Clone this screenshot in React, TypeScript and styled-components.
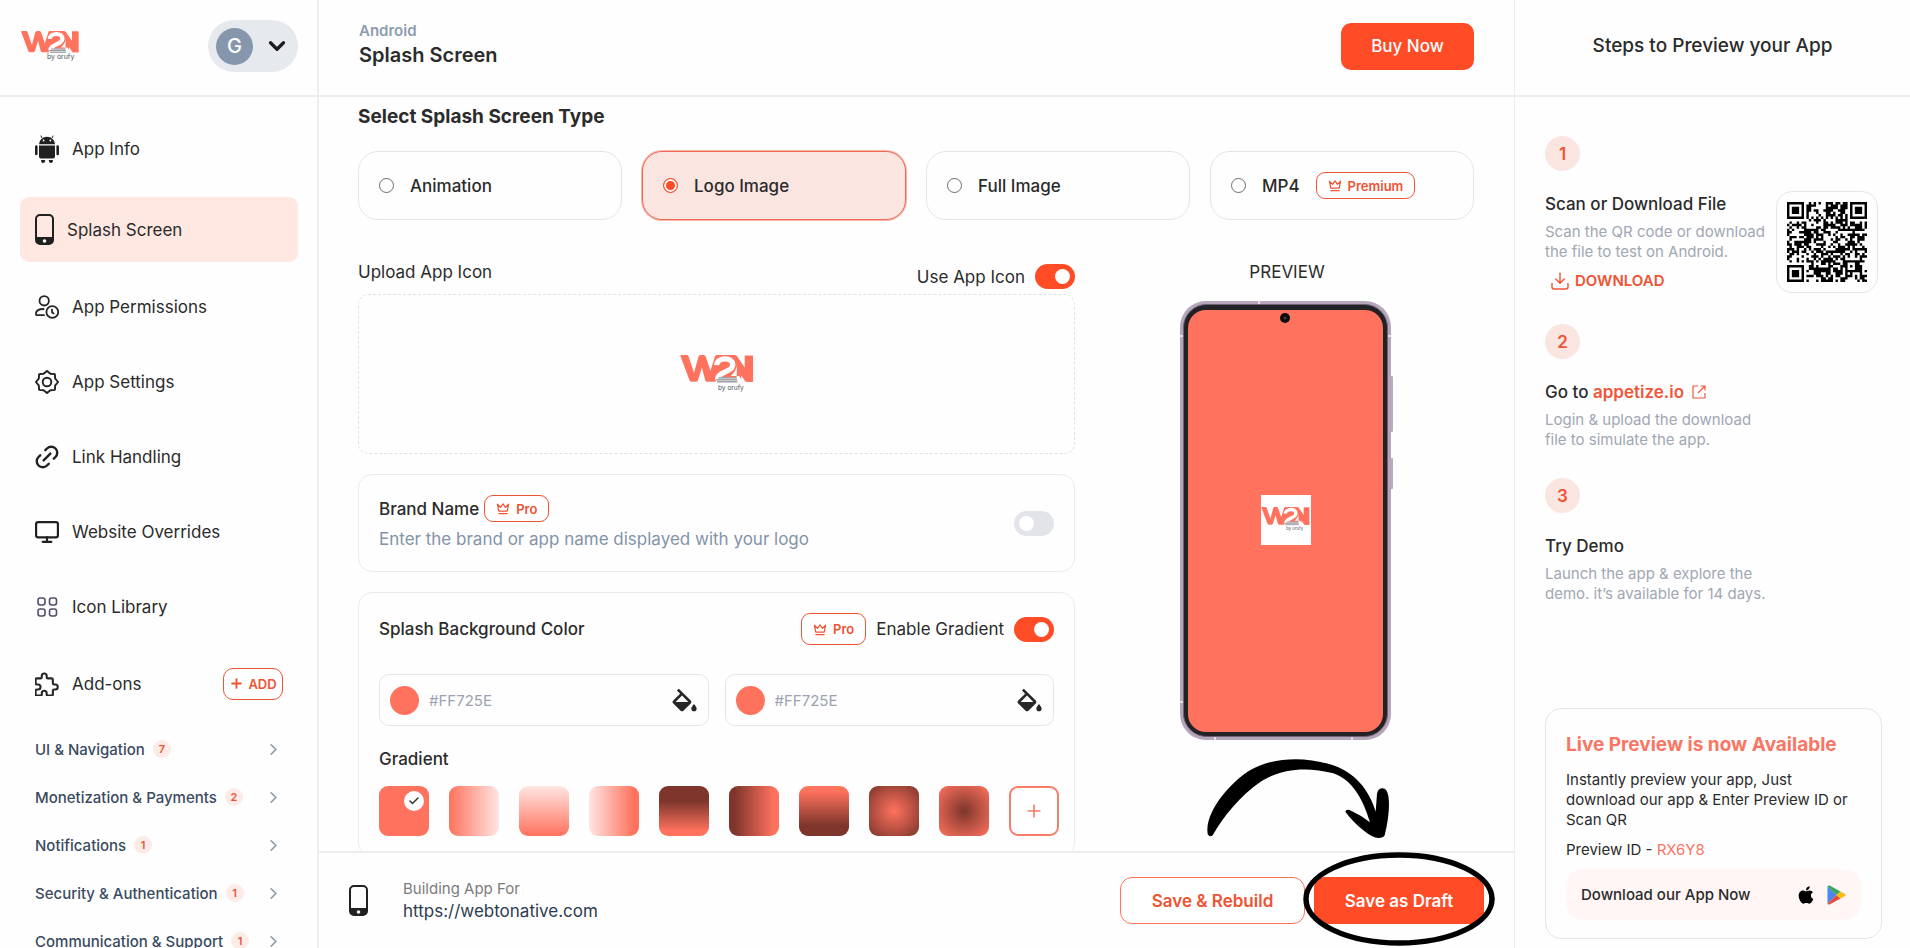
import React, { useId, useState } from "react";
import styled, { createGlobalStyle, css } from "styled-components";
import { Check, ChevronDown, ChevronRight, Link2, Monitor, Plus } from "lucide-react";
import { FaApple } from "react-icons/fa";

const accent = "#ff4b26";
const coral = "#ff725e";
const line = "#eceef0";
const ink = "#2b2b2b";

const GlobalStyle = createGlobalStyle`
  *, *::before, *::after { box-sizing: border-box; }
  body {
    margin: 0;
    background: #fefefe;
    color: ${ink};
    font-family: Inter, "Liberation Sans", sans-serif;
    font-size: 17px;
    overflow: hidden;
  }
  button, input { font: inherit; color: inherit; }
  h1, h2, h3, p, ul, ol, fieldset { margin: 0; padding: 0; border: 0; }
  ul, ol { list-style: none; }
  a { color: inherit; text-decoration: none; }
  svg { display: block; flex: none; }
`;

/* ---------- layout ---------- */

const Shell = styled.div`
  display: grid;
  grid-template-columns: 319px minmax(0, 1fr) 396px;
  height: 100vh;
  overflow: hidden;
`;

const Sidebar = styled.aside`
  display: flex;
  flex-direction: column;
  min-height: 0;
  overflow: hidden;
  border-right: 2px solid ${line};
`;

const Main = styled.main`
  display: flex;
  flex-direction: column;
  min-height: 0;
`;

const StepsPanel = styled.aside`
  display: flex;
  flex-direction: column;
  min-height: 0;
  border-left: 1px solid ${line};
`;

const Bar = styled.header`
  display: flex;
  flex: none;
  align-items: center;
  justify-content: space-between;
  height: 97px;
  border-bottom: 2px solid ${line};
`;

const BrandBar = styled(Bar)`
  padding: 0 19px 3px 20px;
`;

const TitleBar = styled(Bar)`
  padding: 0 40px 3px;
`;

const StepsBar = styled(Bar)`
  justify-content: center;
  padding-bottom: 3px;
  font-size: 19px;
  font-weight: 500;
  line-height: 24px;
`;

/* ---------- buttons ---------- */

const SolidButton = styled.button<{ $wide?: boolean }>`
  height: 47px;
  padding: 0;
  width: ${(p) => (p.$wide ? 170 : 133)}px;
  border: 0;
  border-radius: 10px;
  background: ${accent};
  color: #fff;
  font-size: 17px;
  font-weight: ${(p) => (p.$wide ? 600 : 500)};
  cursor: pointer;
`;

const OutlineButton = styled.button`
  width: 185px;
  height: 47px;
  padding: 0;
  border: 1px solid ${coral};
  border-radius: 12px;
  background: #fff;
  color: #ee5434;
  font-size: 17px;
  font-weight: 600;
  cursor: pointer;
`;

/* ---------- sidebar ---------- */

const AccountButton = styled.button`
  display: flex;
  align-items: center;
  gap: 11px;
  width: 90px;
  height: 52px;
  padding: 0 8px;
  border: 0;
  border-radius: 26px;
  background: #e6e9ed;
  color: #1c1c1c;
`;

const Avatar = styled.span`
  display: grid;
  place-items: center;
  width: 37px;
  height: 37px;
  border-radius: 50%;
  background: #8697ad;
  color: #fff;
  font-size: 20px;
  font-weight: 500;
`;

const NavList = styled.ul`
  padding: 14px 19px 0 20px;
`;

const NavLink = styled.a<{ $active?: boolean }>`
  display: flex;
  align-items: center;
  gap: 13px;
  height: 75px;
  padding: 0 15px;
  border-radius: 9px;
  ${(p) =>
    p.$active &&
    css`
      height: 65px;
      margin: 11px 0 7px;
      background: #ffe7e2;
    `}
`;

const AddonHead = styled.div`
  display: flex;
  align-items: center;
  gap: 13px;
  height: 81px;
  padding: 0 34px 2px 35px;
`;

const AddButton = styled.button`
  display: flex;
  align-items: center;
  justify-content: center;
  gap: 4px;
  width: 60px;
  height: 32px;
  margin-left: auto;
  padding: 0;
  border: 1px solid #ee5434;
  border-radius: 10px;
  background: #fff;
  color: #ee5434;
  font-size: 13px;
  font-weight: 600;
`;

const CategoryButton = styled.button`
  display: flex;
  align-items: center;
  gap: 8px;
  width: 100%;
  height: 48px;
  padding: 0 34px 0 35px;
  border: 0;
  background: none;
  color: #3a4a60;
  font-size: 15px;
  font-weight: 500;
  white-space: nowrap;

  > svg { margin-left: auto; color: #8b95a3; }
`;

const Count = styled.span`
  display: grid;
  place-items: center;
  width: 18px;
  height: 18px;
  border-radius: 50%;
  background: #fdebe8;
  color: #ee5434;
  font-size: 11px;
  font-weight: 600;
`;

/* ---------- main column ---------- */

const Platform = styled.p`
  color: #8a9bb0;
  font-size: 15px;
  font-weight: 600;
  line-height: 20px;
`;

const PageTitle = styled.h1`
  font-size: 20px;
  font-weight: 600;
  line-height: 28px;
`;

const TitleGroup = styled.div`
  padding-bottom: 2px;
`;

const Content = styled.div`
  flex: 1;
  min-height: 0;
  overflow: hidden;
  padding: 6px 40px 0 39px;
`;

const TypeGroup = styled.fieldset`
  min-width: 0;
`;

const TypeTitle = styled.legend`
  padding: 0;
  font-size: 19px;
  font-weight: 700;
  line-height: 28px;
`;

const TypeGrid = styled.div`
  display: grid;
  grid-template-columns: repeat(4, minmax(0, 1fr));
  gap: 20px;
  margin-top: 20px;
`;

const TypeCard = styled.label`
  display: flex;
  align-items: center;
  gap: 16px;
  height: 69px;
  padding: 0 20px;
  border: 1px solid #e3e6e8;
  border-radius: 20px;
  font-weight: 500;

  &:has(input:checked) {
    border-color: #ee6a55;
    background: #fbe5e1;
    box-shadow: 0 0 0 1px #ee6a5580;
  }
`;

const Radio = styled.input`
  appearance: none;
  width: 15px;
  height: 15px;
  margin: 0;
  border: 1px solid #6b6b6b;
  border-radius: 50%;
  background: #fff;

  &:checked {
    border-color: ${accent};
    background: ${accent};
    box-shadow: inset 0 0 0 2px #fff;
  }
`;

const Columns = styled.div`
  display: grid;
  grid-template-columns: minmax(0, 1fr) 374px;
  gap: 25px;
  margin-top: 40px;
`;

const Row = styled.div`
  display: flex;
  align-items: center;
  justify-content: space-between;
`;

const UploadHead = styled(Row)`
  align-items: flex-start;
  height: 34px;
`;

const UploadLabel = styled.span`
  line-height: 24px;
`;

const SwitchLabel = styled.label`
  display: flex;
  align-items: center;
  gap: 10px;
`;

const UploadSwitch = styled(SwitchLabel)`
  padding-top: 4px;
`;

const Switch = styled.input`
  appearance: none;
  flex: none;
  width: 40px;
  height: 25px;
  margin: 0;
  padding: 5px;
  border-radius: 13px;
  background: #e3e4e9;

  &::before {
    content: "";
    display: block;
    width: 15px;
    height: 15px;
    border-radius: 50%;
    background: #fff;
  }

  &:checked { background: ${accent}; }
  &:checked::before { margin-left: 15px; }
`;

const DropArea = styled.div`
  display: grid;
  place-items: center;
  height: 160px;
  border: 1px dashed #dfe3e6;
  border-radius: 10px;
`;

const Card = styled.section`
  padding: 20px;
  border: 1px solid #e9ecee;
  border-radius: 14px;
`;

const BrandCard = styled(Card)`
  display: flex;
  align-items: center;
  justify-content: space-between;
  height: 98px;
  margin-top: 20px;
`;

const BackgroundCard = styled(Card)`
  margin-top: 20px;
`;

const CardTitle = styled.h2`
  font-size: 17px;
  font-weight: 500;
  line-height: 24px;
`;

const BrandTitle = styled.div`
  display: flex;
  align-items: center;
  gap: 5px;
`;

const Hint = styled.p`
  margin-top: 5px;
  color: #8393a8;
  line-height: 24px;
`;

const Tools = styled.div`
  display: flex;
  align-items: center;
  gap: 10px;
`;

const Tier = styled.span<{ $tall?: boolean }>`
  display: inline-flex;
  align-items: center;
  justify-content: center;
  gap: 6px;
  height: ${(p) => (p.$tall ? 32 : 27)}px;
  padding: 0 11px;
  border: 1px solid #ee5434;
  border-radius: 9px;
  background: #fff;
  color: #ee5434;
  font-size: 13px;
  font-weight: 600;
`;

const FieldRow = styled.div`
  display: grid;
  grid-template-columns: repeat(2, minmax(0, 1fr));
  gap: 16px;
  margin-top: 29px;
`;

const ColorField = styled.label`
  display: flex;
  align-items: center;
  gap: 10px;
  height: 52px;
  padding: 0 10px;
  border: 1px solid #e4e7ea;
  border-radius: 10px;
`;

const Dot = styled.span`
  flex: none;
  width: 29px;
  height: 29px;
  border-radius: 50%;
  background: ${coral};
`;

const HexInput = styled.input`
  flex: 1;
  min-width: 0;
  padding: 0;
  border: 0;
  outline: 0;
  background: none;
  color: #9ba3b0;
  font-size: 15px;
`;

const GradientTitle = styled.h3`
  margin-top: 21px;
  font-size: 17px;
  font-weight: 500;
  line-height: 24px;
`;

const Swatches = styled.div`
  display: flex;
  gap: 20px;
  margin-top: 15px;
`;

const Swatch = styled.button<{ $fill: string }>`
  display: flex;
  flex: none;
  align-items: flex-start;
  justify-content: flex-end;
  width: 50px;
  height: 50px;
  padding: 5px;
  border: 0;
  border-radius: 9px;
  background: ${(p) => p.$fill};
`;

const Tick = styled.span`
  display: grid;
  place-items: center;
  width: 20px;
  height: 20px;
  border-radius: 50%;
  background: #fff;
  color: #333;
`;

const AddSwatch = styled.button`
  display: grid;
  flex: none;
  place-items: center;
  width: 50px;
  height: 50px;
  padding: 0;
  border: 2px solid #f97b69;
  border-radius: 9px;
  background: #fff;
  color: #f97b69;
`;

const PreviewColumn = styled.div`
  display: flex;
  flex-direction: column;
  align-items: center;
  gap: 17px;
  line-height: 24px;
`;

/* ---------- footer ---------- */

const Footer = styled.footer`
  display: flex;
  flex: none;
  align-items: center;
  height: 97px;
  padding: 0 30px;
  border-top: 2px solid ${line};
  background: #fefefe;
`;

const Site = styled.div`
  margin-left: 35px;
  color: #2d3b50;
  line-height: 24px;
`;

const SiteCaption = styled.p`
  color: #7b7b7b;
  font-size: 15px;
  line-height: 20px;
`;

const Actions = styled.div`
  display: flex;
  gap: 9px;
  margin-left: auto;
`;

const Marked = styled.div`
  position: relative;
`;

const MarkEllipse = styled.svg`
  position: absolute;
  top: -26px;
  left: -12px;
  pointer-events: none;
`;

const MarkArrow = styled.svg`
  position: absolute;
  right: 92px;
  bottom: 84px;
  pointer-events: none;
`;

/* ---------- steps panel ---------- */

const StepsBody = styled.div`
  display: flex;
  flex: 1;
  flex-direction: column;
  min-height: 0;
  padding: 39px 28px 9px 30px;
`;

const Step = styled.li`
  display: flex;
  align-items: flex-start;
  justify-content: space-between;
  margin-bottom: 28px;
`;

const StepNumber = styled.span`
  display: grid;
  place-items: center;
  width: 35px;
  height: 35px;
  margin-bottom: 21px;
  border-radius: 50%;
  background: #fbe5e1;
  color: #ee5434;
  font-size: 17px;
  font-weight: 600;
`;

const StepTitle = styled.h2`
  display: flex;
  align-items: center;
  margin-bottom: 6px;
  font-size: 17px;
  font-weight: 500;
  line-height: 24px;
  white-space: pre;

  a {
    display: flex;
    align-items: center;
    gap: 8px;
    color: #f0563a;
    font-weight: 600;
  }
`;

const StepText = styled.p`
  color: #a1a7b3;
  font-size: 15px;
  line-height: 20px;
  white-space: nowrap;
`;

const DownloadLink = styled.a`
  display: flex;
  align-items: center;
  gap: 6px;
  margin: 7px 0 3px 6px;
  color: #ee5434;
  font-size: 15px;
  font-weight: 600;
  line-height: 24px;
`;

const QrBox = styled.div`
  flex: none;
  margin: 55px 4px 0 0;
  padding: 10px;
  border: 1px solid #e3e6e8;
  border-radius: 16px;
`;

const LiveCard = styled.section`
  height: 231px;
  margin-top: auto;
  padding: 24px 20px 18px;
  border: 1px solid #e3e6e8;
  border-radius: 16px;
  font-size: 15px;
  line-height: 20px;
`;

const LiveTitle = styled.h2`
  margin-bottom: 13px;
  color: #f97564;
  font-size: 19px;
  font-weight: 700;
  line-height: 24px;
  white-space: nowrap;
`;

const PreviewId = styled.p`
  margin: 10px 0 9px;
  span { color: #f97564; }
`;

const StoreButton = styled.button`
  display: flex;
  align-items: center;
  gap: 11px;
  width: 100%;
  height: 51px;
  padding: 0 15px;
  border: 0;
  border-radius: 16px;
  background: #fff6f5;
  font-size: 15px;
  font-weight: 500;

  span { margin-right: auto; }
`;

/* ---------- drawings ---------- */

function Logo({ width, captionX, captionSize }: { width: number; captionX: number; captionSize: number }) {
  return (
    <svg width={width} height={Math.round(width / 2)} viewBox="0 0 224 116" role="img" aria-label="W2N by orufy">
      <path
        fill={coral}
        d="M0 2Q1 0 4 0H20Q24 0 25 4L42 54L55 6Q57 0 62 0H71Q76 0 78 6L92 48L106 4Q108 0 112 0H166Q170 0 173 4L197 40V2H222V82H199L186 62V82H104H82Q78 82 76 77L66 38L54 77Q52 82 48 82H35Q30 82 28 77Z"
      />
      <path d="M111 31C112 6 162 4 160 31C158 54 112 50 114 76" fill="none" stroke="#fff" strokeWidth="16" />
      <path d="M173 22Q174 46 154 64H180L192 84H108V68H172" fill="#fff" />
      <path d="M173 5L197 40V2H222V82H202L172 40Z" fill={coral} />
      <path d="M116 70H172M108 76H174M112 82H174" stroke="#6b6f76" strokeWidth="3" />
      <text x={captionX} y="108" fontSize={captionSize} fill="#4b5560">by orufy</text>
    </svg>
  );
}

function PhoneGlyph({ width = 19 }: { width?: number }) {
  return (
    <svg width={width} height="31" viewBox="0 0 19 31">
      <rect x="1" y="1" width="17" height="29" rx="4" fill="none" stroke="#202020" strokeWidth="2" />
      <path d="M1 23H18V26Q18 30 14 30H5Q1 30 1 26Z" fill="#202020" />
      <circle cx="9.500" cy="27" r="1.800" fill="#fff" />
    </svg>
  );
}

function AndroidGlyph() {
  return (
    <svg width="24" height="28" viewBox="0 0 24 28" fill="#202020">
      <path d="M4 9.200A8 7.500 0 0 1 20 9.200Z" />
      <path d="M7 3L5.800 .6M17 3L18.200 .6" stroke="#202020" strokeWidth="1" />
      <circle cx="8.600" cy="5.500" r=".9" fill="#fff" />
      <circle cx="15.400" cy="5.500" r=".9" fill="#fff" />
      <path d="M4 10.400H20V21.500Q20 23.500 18 23.500H6Q4 23.500 4 21.500Z" />
      <rect x="0" y="10.200" width="2.600" height="10" rx="1.300" />
      <rect x="21.400" y="10.200" width="2.600" height="10" rx="1.300" />
      <path d="M6 25H10.200Q10.200 28 8.100 28T6 25ZM13.800 25H18Q18 28 15.900 28T13.800 25Z" />
    </svg>
  );
}

function PermissionsGlyph() {
  return (
    <svg width="24" height="24" viewBox="0 0 24 24" fill="none" stroke="#252525" strokeWidth="1.800" strokeLinecap="round" strokeLinejoin="round">
      <circle cx="9.200" cy="5.800" r="4.700" />
      <path d="M9 20.200H2.200Q.9 20.200 .9 18.900C.9 15.500 4 14 8.600 14" />
      <circle cx="17.300" cy="17" r="5.900" />
      <path d="M17 14.600V17.300L18.600 18.400" />
    </svg>
  );
}

function GearGlyph() {
  const points = Array.from({ length: 16 }, (_, i) => {
    const radius = i % 2 ? 8.9 : 11.1;
    const angle = (i * Math.PI) / 8 - Math.PI / 2;
    return `${(12 + radius * Math.cos(angle)).toFixed(2)},${(12 + radius * Math.sin(angle)).toFixed(2)}`;
  }).join(" ");
  return (
    <svg width="24" height="24" viewBox="0 0 24 24" fill="none" stroke="#202020" strokeWidth="1.900" strokeLinejoin="round">
      <polygon points={points} />
      <circle cx="12" cy="12" r="4.300" />
    </svg>
  );
}

function GridGlyph() {
  return (
    <svg width="24" height="24" viewBox="0 0 24 24" fill="none" stroke="#4f4d68" strokeWidth="1.600">
      {[3, 14.500].map((x) =>
        [3, 14].map((y) => <rect key={`${x}-${y}`} x={x} y={y} width="7" height="7" rx="2.200" />)
      )}
    </svg>
  );
}

function PuzzleGlyph() {
  return (
    <svg width="24" height="24" viewBox="2.500 1.800 19.500 19.500" fill="none" stroke="#252525" strokeWidth="1.700" strokeLinejoin="round">
      <path d="M4 7h3a1 1 0 0 0 1-1v-1a2 2 0 0 1 4 0v1a1 1 0 0 0 1 1h3a1 1 0 0 1 1 1v3a1 1 0 0 0 1 1h1a2 2 0 0 1 0 4h-1a1 1 0 0 0-1 1v3a1 1 0 0 1-1 1h-3a1 1 0 0 1-1-1v-1a2 2 0 0 0-4 0v1a1 1 0 0 1-1 1h-3a1 1 0 0 1-1-1v-3a1 1 0 0 1 1-1h1a2 2 0 0 0 0-4h-1a1 1 0 0 1-1-1v-3a1 1 0 0 1 1-1" />
    </svg>
  );
}

const DiagonalLink = styled(Link2)`
  rotate: -45deg;
  overflow: visible;
`;

function CrownGlyph() {
  return (
    <svg width="14" height="13" viewBox="0 0 14 14" fill="none" stroke="currentColor" strokeWidth="1.300" strokeLinecap="round" strokeLinejoin="round">
      <path d="M2.400 9.800L1 2.400L4.400 5.800L7 2L9.600 5.800L13 2.400L11.600 9.800ZM2.600 12.600H11.400" />
    </svg>
  );
}

function BucketGlyph() {
  return (
    <svg width="26" height="24" viewBox="2.500 -.5 19.500 18" fill="#262626">
      <path d="M16.560 8.940L7.620 0 6.210 1.410l2.380 2.380-5.150 5.150a1.490 1.490 0 0 0 0 2.120l5.500 5.500c.29.29.68.44 1.060.44s.77-.15 1.060-.44l5.500-5.500c.59-.58.59-1.530 0-2.120zM5.210 10L10 5.210 14.790 10H5.210zM19 11.500s-2 2.170-2 3.500c0 1.100.9 2 2 2s2-.9 2-2c0-1.330-2-3.500-2-3.500z" />
    </svg>
  );
}

function DownloadGlyph() {
  return (
    <svg width="18" height="18" viewBox="0 0 18 18" fill="none" stroke="currentColor" strokeWidth="1.400" strokeLinecap="round" strokeLinejoin="round">
      <path d="M9 1V11M4.800 7L9 11.200L13.200 7M1 11.500V15Q1 17 3 17H15Q17 17 17 15V11.500" />
    </svg>
  );
}

function ExternalGlyph() {
  return (
    <svg width="14" height="14" viewBox="0 0 14 14" fill="none" stroke="currentColor" strokeWidth="1.200" strokeLinejoin="round">
      <path d="M6 1H1V13H13V8M8.500 1H13V5.500M13 1L6 8" />
    </svg>
  );
}

function PlayGlyph() {
  return (
    <svg width="19" height="20" viewBox="0 0 19 20">
      <path d="M.5 1.200V18.800L9.500 10Z" fill="#4a86f0" />
      <path d="M.5 1.200Q1 0 2.600 .6L13.500 6.500L9.500 10Z" fill="#37a55a" />
      <path d="M.5 18.800Q1 20 2.600 19.400L13.500 13.500L9.500 10Z" fill="#ea4a3c" />
      <path d="M13.300 6.400L18 9Q19.400 10 18 11L13.300 13.600L9.300 10Z" fill="#fbbc12" />
    </svg>
  );
}

const QR_SIZE = 33;

function isFinder(x: number, y: number): boolean | null {
  const corners = [
    [0, 0],
    [QR_SIZE - 7, 0],
    [0, QR_SIZE - 7],
  ];
  for (const [cx, cy] of corners) {
    const dx = Math.abs(x - cx - 3);
    const dy = Math.abs(y - cy - 3);
    const ring = Math.max(dx, dy);
    if (ring <= 4) return ring !== 2 && ring !== 4;
  }
  const align = Math.max(Math.abs(x - 26), Math.abs(y - 26));
  if (align <= 2) return align !== 1;
  return null;
}

function QrCode() {
  let seed = 90;
  let path = "";
  for (let y = 0; y < QR_SIZE; y++) {
    for (let x = 0; x < QR_SIZE; x++) {
      seed = (seed * 1103515245 + 12345) % 2147483648;
      const fixed = isFinder(x, y);
      const dark = fixed ?? (x === 6 || y === 6 ? (x + y) % 2 === 0 : seed / 2147483648 < 0.52);
      if (dark) path += `M${x} ${y}h1v1h-1z`;
    }
  }
  return (
    <svg width="80" height="80" viewBox={`0 0 ${QR_SIZE} ${QR_SIZE}`} role="img" aria-label="QR code">
      <path d={path} fill="#000" />
    </svg>
  );
}

const PhoneBody = styled.div`
  position: relative;
  width: 211px;
  height: 439px;
  margin-right: 3px;
  padding: 8px 8px 10px;
`;

const PhoneFrame = styled.svg`
  position: absolute;
  inset: 0;
`;

const PhoneScreen = styled.div`
  position: relative;
  display: grid;
  place-items: center;
  height: 100%;
`;

const SplashTile = styled.div`
  display: grid;
  place-items: center;
  width: 50px;
  height: 50px;
  background: #fff;
`;

function PhonePreview() {
  return (
    <PhoneBody>
      <PhoneFrame width="214" height="439" viewBox="0 0 214 439">
        <rect x="209" y="75" width="4" height="56" rx="1" fill="#b9abc0" />
        <rect x="209" y="157" width="4" height="31" rx="1" fill="#b9abc0" />
        <rect x="0" y="0" width="211" height="439" rx="26" fill="#b5a6ba" />
        <path d="M0 35H3M208 35H211M79 0V3M0 401H3M35 436V439M172 436V439" stroke="#e7dfea" strokeWidth="2" />
        <rect x="3.500" y="3.500" width="204" height="432" rx="23" fill="#232125" stroke="#6b6272" strokeWidth="1" />
        <rect x="8" y="9" width="195" height="422" rx="18" fill={coral} />
        <circle cx="105" cy="17" r="5" fill="#0b0b0b" />
        <circle cx="105" cy="17" r="1.500" fill="#3a3a3a" />
      </PhoneFrame>
      <PhoneScreen>
        <SplashTile>
          <Logo width={49} captionX={115} captionSize={20} />
        </SplashTile>
      </PhoneScreen>
    </PhoneBody>
  );
}

/* ---------- data ---------- */

const navItems = [
  { label: "App Info", icon: <AndroidGlyph /> },
  { label: "Splash Screen", icon: <PhoneGlyph />, active: true },
  { label: "App Permissions", icon: <PermissionsGlyph /> },
  { label: "App Settings", icon: <GearGlyph /> },
  { label: "Link Handling", icon: <DiagonalLink size={24} viewBox="2 2 20 20" color="#202020" /> },
  { label: "Website Overrides", icon: <Monitor size={24} viewBox="1 1 22 22" color="#202020" /> },
  { label: "Icon Library", icon: <GridGlyph /> },
];

const categories: [string, number][] = [
  ["UI & Navigation", 7],
  ["Monetization & Payments", 2],
  ["Notifications", 1],
  ["Security & Authentication", 1],
  ["Communication & Support", 1],
];

const splashTypes = ["Animation", "Logo Image", "Full Image", "MP4"];

const dark = "#7d352c";
const pale = "#ffe6e2";
const gradients = [
  coral,
  `linear-gradient(90deg, ${coral}, ${pale})`,
  `linear-gradient(180deg, ${pale}, ${coral})`,
  `linear-gradient(90deg, ${pale}, ${coral} 90%)`,
  `linear-gradient(180deg, ${dark} 30%, ${coral} 90%)`,
  `linear-gradient(90deg, ${dark} 10%, ${coral} 90%)`,
  `linear-gradient(180deg, ${coral} 10%, ${dark} 80%)`,
  `radial-gradient(circle, ${coral}, ${dark})`,
  `radial-gradient(circle, ${dark}, ${coral})`,
];

/* ---------- page ---------- */

function TierBadge({ label, tall }: { label: string; tall?: boolean }) {
  return (
    <Tier $tall={tall}>
      <CrownGlyph />
      {label}
    </Tier>
  );
}

function ColorInput({ name }: { name: string }) {
  return (
    <ColorField>
      <Dot />
      <HexInput aria-label={name} defaultValue="#FF725E" />
      <BucketGlyph />
    </ColorField>
  );
}

export default function App() {
  const [type, setType] = useState("Logo Image");
  const [picked, setPicked] = useState(0);
  const brandId = useId();

  return (
    <>
      <GlobalStyle />
      <Shell>
        <Sidebar>
          <BrandBar>
            <Logo width={60} captionX={100} captionSize={27} />
            <AccountButton aria-label="Account">
              <Avatar>G</Avatar>
              <ChevronDown size={26} strokeWidth={3} />
            </AccountButton>
          </BrandBar>
          <nav>
            <NavList>
              {navItems.map((item) => (
                <li key={item.label}>
                  <NavLink href="#" $active={item.active}>
                    {item.icon}
                    {item.label}
                  </NavLink>
                </li>
              ))}
            </NavList>
            <AddonHead>
              <PuzzleGlyph />
              Add-ons
              <AddButton>
                <Plus size={15} strokeWidth={3} />
                ADD
              </AddButton>
            </AddonHead>
            {categories.map(([label, count]) => (
              <CategoryButton key={label}>
                {label}
                <Count>{count}</Count>
                <ChevronRight size={19} />
              </CategoryButton>
            ))}
          </nav>
        </Sidebar>

        <Main>
          <TitleBar>
            <TitleGroup>
              <Platform>Android</Platform>
              <PageTitle>Splash Screen</PageTitle>
            </TitleGroup>
            <SolidButton>Buy Now</SolidButton>
          </TitleBar>

          <Content>
            <TypeGroup>
              <TypeTitle>Select Splash Screen Type</TypeTitle>
              <TypeGrid>
                {splashTypes.map((name) => (
                  <TypeCard key={name}>
                    <Radio type="radio" name="splash-type" checked={type === name} onChange={() => setType(name)} />
                    {name}
                    {name === "MP4" && <TierBadge label="Premium" />}
                  </TypeCard>
                ))}
              </TypeGrid>
            </TypeGroup>

            <Columns>
              <div>
                <UploadHead>
                  <UploadLabel>Upload App Icon</UploadLabel>
                  <UploadSwitch>
                    Use App Icon
                    <Switch type="checkbox" defaultChecked />
                  </UploadSwitch>
                </UploadHead>
                <DropArea>
                  <Logo width={76} captionX={115} captionSize={20} />
                </DropArea>

                <BrandCard>
                  <div>
                    <BrandTitle>
                      <CardTitle as="label" htmlFor={brandId}>Brand Name</CardTitle>
                      <TierBadge label="Pro" />
                    </BrandTitle>
                    <Hint>Enter the brand or app name displayed with your logo</Hint>
                  </div>
                  <Switch id={brandId} type="checkbox" />
                </BrandCard>

                <BackgroundCard>
                  <Row>
                    <CardTitle>Splash Background Color</CardTitle>
                    <Tools>
                      <TierBadge label="Pro" tall />
                      <SwitchLabel>
                        Enable Gradient
                        <Switch type="checkbox" defaultChecked />
                      </SwitchLabel>
                    </Tools>
                  </Row>
                  <FieldRow>
                    <ColorInput name="First color" />
                    <ColorInput name="Second color" />
                  </FieldRow>
                  <GradientTitle>Gradient</GradientTitle>
                  <Swatches>
                    {gradients.map((fill, i) => (
                      <Swatch key={fill} $fill={fill} aria-label={`Gradient ${i + 1}`} onClick={() => setPicked(i)}>
                        {picked === i && (
                          <Tick>
                            <Check size={12} strokeWidth={3} />
                          </Tick>
                        )}
                      </Swatch>
                    ))}
                    <AddSwatch aria-label="Add gradient">
                      <Plus size={20} strokeWidth={2} />
                    </AddSwatch>
                  </Swatches>
                </BackgroundCard>
              </div>

              <PreviewColumn>
                PREVIEW
                <PhonePreview />
              </PreviewColumn>
            </Columns>
          </Content>

          <Footer>
            <PhoneGlyph />
            <Site>
              <SiteCaption>Building App For</SiteCaption>
              https://webtonative.com
            </Site>
            <Actions>
              <OutlineButton>Save &amp; Rebuild</OutlineButton>
              <Marked>
                <SolidButton $wide>Save as Draft</SolidButton>
                <MarkEllipse width="194" height="96" viewBox="0 0 194 96">
                  <ellipse cx="97" cy="48" rx="93" ry="44" fill="none" stroke="#000" strokeWidth="5.500" />
                </MarkEllipse>
                <MarkArrow width="187" height="83" viewBox="315 50 561 249">
                  <path d="M322 268C324 200 400 120 450 90C510 55 600 45 690 72C765 94 808 150 827 214L831 160Q834 144 848 144Q861 145 865 166Q872 210 854 285Q850 293 835 293Q818 293 790 270Q758 244 736 214Q737 206 749 209Q782 224 810 246C790 180 760 120 700 99C620 78 545 85 485 122C420 165 370 230 338 285Q330 292 323 282Z" />
                </MarkArrow>
              </Marked>
            </Actions>
          </Footer>
        </Main>

        <StepsPanel>
          <StepsBar as="div">Steps to Preview your App</StepsBar>
          <StepsBody>
            <ol>
              <Step>
                <div>
                  <StepNumber>1</StepNumber>
                  <StepTitle>Scan or Download File</StepTitle>
                  <StepText>
                    Scan the QR code or download
                    <br />
                    the file to test on Android.
                  </StepText>
                  <DownloadLink href="#">
                    <DownloadGlyph />
                    DOWNLOAD
                  </DownloadLink>
                </div>
                <QrBox>
                  <QrCode />
                </QrBox>
              </Step>
              <Step>
                <div>
                  <StepNumber>2</StepNumber>
                  <StepTitle>
                    {"Go to "}
                    <a href="#">
                      appetize.io
                      <ExternalGlyph />
                    </a>
                  </StepTitle>
                  <StepText>
                    Login &amp; upload the download
                    <br />
                    file to simulate the app.
                  </StepText>
                </div>
              </Step>
              <Step>
                <div>
                  <StepNumber>3</StepNumber>
                  <StepTitle>Try Demo</StepTitle>
                  <StepText>
                    Launch the app &amp; explore the
                    <br />
                    demo. it’s available for 14 days.
                  </StepText>
                </div>
              </Step>
            </ol>
            <LiveCard>
              <LiveTitle>Live Preview is now Available</LiveTitle>
              <p>Instantly preview your app, Just download our app &amp; Enter Preview ID or Scan QR</p>
              <PreviewId>
                Preview ID - <span>RX6Y8</span>
              </PreviewId>
              <StoreButton>
                <span>Download our App Now</span>
                <FaApple size={20} color="#000" />
                <PlayGlyph />
              </StoreButton>
            </LiveCard>
          </StepsBody>
        </StepsPanel>
      </Shell>
    </>
  );
}
